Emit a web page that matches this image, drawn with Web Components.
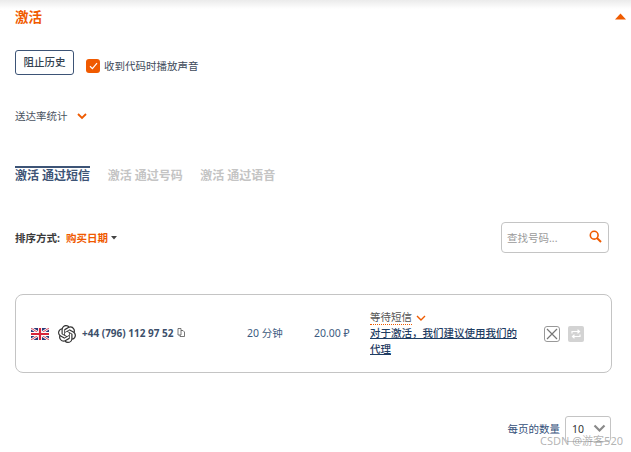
<!DOCTYPE html>
<html lang="zh"><head><meta charset="utf-8">
<style>
html,body{margin:0;padding:0;background:#fff;height:452px;overflow:hidden}
body{font-family:"Noto Sans","Noto Sans CJK SC",sans-serif;color:#34495e;font-size:10.5px}
</style></head><body>
<activation-page></activation-page>
<script>
function def(name,html){customElements.define(name,class extends HTMLElement{connectedCallback(){if(this.shadowRoot)return;this.attachShadow({mode:'open'}).innerHTML=html}})}
const FONT='"Noto Sans","Noto Sans CJK SC",sans-serif';
def('head-bar',`<style>
:host{display:flex;justify-content:space-between;align-items:center;height:35px;box-sizing:border-box;padding:0 5px 2px 15px;background:linear-gradient(#ebebeb,#fff 9px);font:700 13.5px/18px ${FONT};color:#f05a00}
svg{display:block}
</style><span>激活</span><svg width="11" height="7" viewBox="0 0 11 7"><path d="M5.500 0.500 11 6.500H0Z" fill="#ef5b00"/></svg>`);
def('tool-row',`<style>
:host{display:flex;align-items:flex-start;height:24px;margin:15px 0 0 15px;font:10.5px/14px ${FONT};color:#3e4a5a}
.b{box-sizing:border-box;width:59px;height:25px;border:1px solid #3d5476;border-radius:3px;display:flex;align-items:center;justify-content:center;font-weight:500;color:#333f50;padding-bottom:2px}
.c{box-sizing:border-box;width:14px;height:14px;margin:9px 4px 0 12px;background:#f05a00;border-radius:3px;display:flex;align-items:center;justify-content:center}
.t{margin-top:9px}
</style><div class="b">阻止历史</div><div class="c"><svg width="9" height="8" viewBox="0 0 9 8"><path d="M1 4.300 3.400 6.600 8 1.200" fill="none" stroke="#fff" stroke-width="1.200"/></svg></div><div class="t">收到代码时播放声音</div>`);
def('stat-row',`<style>
:host{display:flex;align-items:center;gap:9px;margin:35px 0 0 15px;height:14px;font:10.5px/14px ${FONT};color:#4a5260}
</style><span>送达率统计</span><svg width="10" height="7" viewBox="0 0 10 7"><path d="M1 1 5 5 9 1" fill="none" stroke="#ef5b00" stroke-width="1.800"/></svg>`);
def('tab-row',`<style>
:host{display:flex;gap:17.500px;margin:43px 0 0 15px;font:700 12px/16px ${FONT};color:#c4c4c4}
div{border-top:2px solid transparent;white-space:pre}
.a{border-top-color:#3d5476;color:#3d5476}
</style><div class="a">激活 通过短信</div><div>激活 通过号码</div><div>激活 通过语音</div>`);
def('sort-row',`<style>
:host{display:flex;justify-content:space-between;align-items:center;margin:38px 22px 0 15px;height:31px;font:10.5px/14px ${FONT}}
.l{display:flex;align-items:center}
b{color:#3a3a3a;margin-right:6px}
i{font-style:normal;font-weight:700;color:#f05a00;margin-right:3px}
.s{box-sizing:border-box;width:108px;height:31px;border:1px solid #c4c4c4;border-radius:4px;display:flex;align-items:center;justify-content:space-between;padding:0 6px 0 5px;color:#9a9a9a;font-size:10.5px}
.s svg{margin-bottom:3px}
</style><div class="l"><b>排序方式:</b><i>购买日期</i><svg width="6" height="4" viewBox="0 0 6 4"><path d="M0 0H6L3 3.500Z" fill="#444"/></svg></div>
<div class="s"><span>查找号码...</span><svg width="13" height="13" viewBox="0 0 13 13"><circle cx="5.200" cy="5.200" r="3.900" fill="none" stroke="#ef5b00" stroke-width="1.600"/><path d="M8 8 12 12" stroke="#ef5b00" stroke-width="2"/></svg></div>`);
def('order-card',`<style>
:host{display:flex;align-items:center;box-sizing:border-box;margin:41px 19px 0 15px;height:79px;border:1px solid #c4c4c4;border-radius:8px;padding:0 0 0 15px;font:10.5px/14px ${FONT};color:#3d5476}
.flag{display:block;margin-right:9px}
.logo{display:block;margin-right:6px}
.ph{font:700 10px/14px "Open Sans","Noto Sans",sans-serif;color:#3d4f6b;width:165px;display:flex;align-items:center;gap:3px;white-space:nowrap;padding-bottom:2px}
.tm{width:67px;white-space:nowrap;color:#3d5a80;padding-bottom:2px}
.pr{width:56px;white-space:nowrap;color:#3d5a80;padding-bottom:2px}
.st{width:174px;box-sizing:border-box;padding-right:24px;line-height:16px}
.w{display:flex;align-items:center;gap:4px;color:#555;height:14px}
.w span{border-bottom:1px dotted #ef5b00;line-height:13px}
a{display:block;font-weight:500;color:#1f3d63;text-decoration:underline;line-height:16px}
.x{display:block;margin-right:8px}
</style>
<svg class="flag" width="18" height="12" viewBox="0 0 18 12"><rect width="18" height="12" fill="#2b3a78"/><path d="M0 0 18 12M18 0 0 12" stroke="#fff" stroke-width="2.600"/><path d="M0 0 18 12M18 0 0 12" stroke="#d8324a" stroke-width=".9"/><path d="M9 0V12M0 6H18" stroke="#fff" stroke-width="4"/><path d="M9 0V12M0 6H18" stroke="#d8233a" stroke-width="2.200"/></svg>
<svg class="logo" width="18" height="18" viewBox="0 0 24 24" fill="#333"><path d="M22.2819 9.8211a5.9847 5.9847 0 0 0-.5157-4.9108 6.0462 6.0462 0 0 0-6.5098-2.9A6.0651 6.0651 0 0 0 4.9807 4.1818a5.9847 5.9847 0 0 0-3.9977 2.9 6.0462 6.0462 0 0 0 .7427 7.0966 5.98 5.98 0 0 0 .511 4.9107 6.051 6.051 0 0 0 6.5146 2.9001A5.9847 5.9847 0 0 0 13.2599 24a6.0557 6.0557 0 0 0 5.7718-4.2058 5.9894 5.9894 0 0 0 3.9977-2.9001 6.0557 6.0557 0 0 0-.7475-7.0729zm-9.022 12.6081a4.4755 4.4755 0 0 1-2.8764-1.0408l.1419-.0804 4.7783-2.7582a.7948.7948 0 0 0 .3927-.6813v-6.7369l2.02 1.1686a.071.071 0 0 1 .038.052v5.5826a4.504 4.504 0 0 1-4.4945 4.4944zm-9.6607-4.1254a4.4708 4.4708 0 0 1-.5346-3.0137l.142.0852 4.783 2.7582a.7712.7712 0 0 0 .7806 0l5.8428-3.3685v2.3324a.0804.0804 0 0 1-.0332.0615L9.74 19.9502a4.4992 4.4992 0 0 1-6.1408-1.6464zM2.3408 7.8956a4.485 4.485 0 0 1 2.3655-1.9728V11.6a.7664.7664 0 0 0 .3879.6765l5.8144 3.3543-2.0201 1.1685a.0757.0757 0 0 1-.071 0l-4.8303-2.7865A4.504 4.504 0 0 1 2.3408 7.872zm16.5963 3.8558L13.1038 8.364 15.1192 7.2a.0757.0757 0 0 1 .071 0l4.8303 2.7913a4.4944 4.4944 0 0 1-.6765 8.1042v-5.6772a.79.79 0 0 0-.407-.667zm2.0107-3.0231l-.142-.0852-4.7735-2.7818a.7759.7759 0 0 0-.7854 0L9.409 9.2297V6.8974a.0662.0662 0 0 1 .0284-.0615l4.8303-2.7866a4.4992 4.4992 0 0 1 6.6802 4.66zM8.3065 12.863l-2.02-1.1638a.0804.0804 0 0 1-.038-.0567V6.0742a4.4992 4.4992 0 0 1 7.3757-3.4537l-.142.0805L8.704 5.459a.7948.7948 0 0 0-.3927.6813zm1.0976-2.3654l2.602-1.4998 2.6069 1.4998v2.9994l-2.5974 1.4997-2.6067-1.4997Z"/></svg>
<div class="ph"><span>+44 (796) 112 97 52</span><svg width="8" height="9" viewBox="0 0 8 9" fill="none" stroke="#555" stroke-width=".8"><path d="M1 .5H4V7H1Z"/><path d="M4 2.500H6L7.500 4V8.500H3V7"/></svg></div>
<div class="tm">20 分钟</div><div class="pr">20.00 ₽</div>
<div class="st"><div class="w"><span>等待短信</span><svg width="10" height="6" viewBox="0 0 10 6"><path d="M1 1 5 5 9 1" fill="none" stroke="#ef5b00" stroke-width="1.400"/></svg></div><a>对于激活，我们建议使用我们的代理</a></div>
<svg class="x" width="16" height="16" viewBox="0 0 16 16" fill="none"><rect x=".5" y=".5" width="15" height="15" rx="2.500" stroke="#999"/><path d="M3 3 13 13M13 3 3 13" stroke="#777" stroke-width="1.200"/></svg>
<svg width="16" height="16" viewBox="0 0 16 16"><rect width="16" height="16" rx="2" fill="#d3d3d3"/><path d="M4 7.500V5.500H11M9.500 3.800 11.500 5.500 9.500 7.200M12 8.500V10.500H5M6.500 8.800 4.500 10.500 6.500 12.200" fill="none" stroke="#fff" stroke-width="1.200"/></svg>`);
def('page-size',`<style>
:host{display:flex;justify-content:flex-end;align-items:center;gap:5px;margin:43px 20px 0 0;height:25px;font:10.5px/14px ${FONT};color:#34507a}
.s{box-sizing:border-box;width:46px;height:26px;border:1px solid #c4c4c4;border-radius:3px;display:flex;align-items:center;justify-content:space-between;padding:0 4px 0 6px;color:#333}
</style><span>每页的数量</span><div class="s"><span>10</span><svg width="13" height="9" viewBox="0 0 13 9"><path d="M1.500 1.500 6.500 6.500 11.500 1.500" fill="none" stroke="#8a8a8a" stroke-width="2.200"/></svg></div>`);
def('water-mark',`<style>
:host{position:absolute;right:8px;top:434px;font:11px/14px ${FONT};color:rgba(130,130,130,.6);white-space:nowrap}
</style>CSDN @游客520`);
def('activation-page',`<style>:host{display:block;width:631px;height:452px;position:relative;overflow:hidden}</style>
<head-bar></head-bar><tool-row></tool-row><stat-row></stat-row><tab-row></tab-row><sort-row></sort-row><order-card></order-card><page-size></page-size><water-mark></water-mark>`);
</script>
</body></html>
